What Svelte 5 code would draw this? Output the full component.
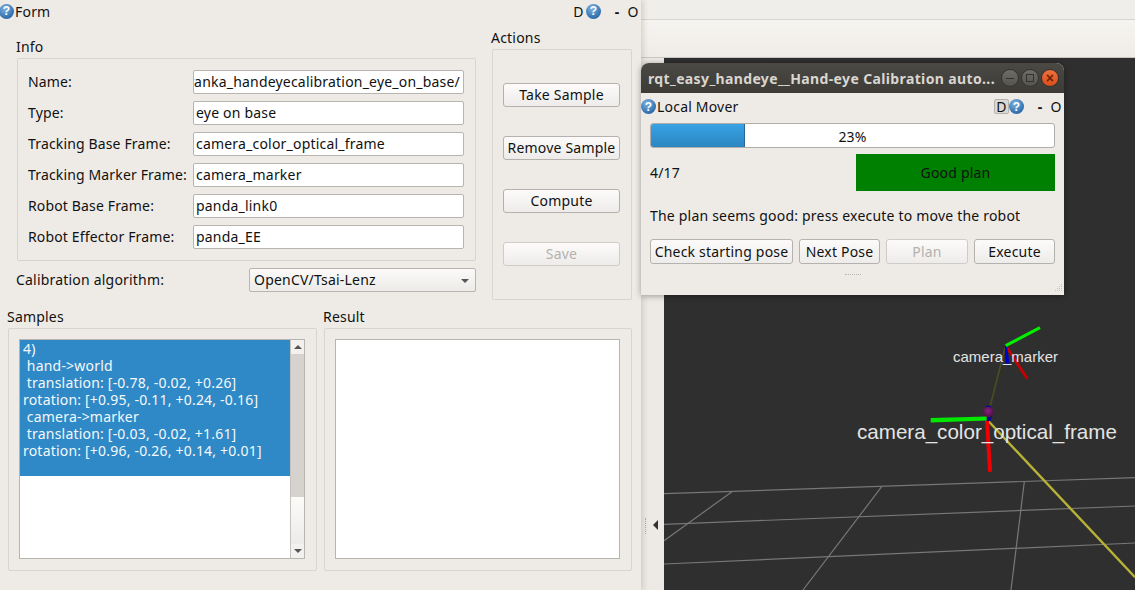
<script lang="ts">
  const fields = [
    { label: 'Name:', value: 'franka_handeyecalibration_eye_on_base/', clipped: true },
    { label: 'Type:', value: 'eye on base' },
    { label: 'Tracking Base Frame:', value: 'camera_color_optical_frame' },
    { label: 'Tracking Marker Frame:', value: 'camera_marker' },
    { label: 'Robot Base Frame:', value: 'panda_link0' },
    { label: 'Robot Effector Frame:', value: 'panda_EE' }
  ];

  const actions = [
    { label: 'Take Sample' },
    { label: 'Remove Sample' },
    { label: 'Compute' },
    { label: 'Save', disabled: true }
  ];

  const sample = [
    '4)',
    ' hand->world',
    ' translation: [-0.78, -0.02, +0.26]',
    'rotation: [+0.95, -0.11, +0.24, -0.16]',
    ' camera->marker',
    ' translation: [-0.03, -0.02, +1.61]',
    'rotation: [+0.96, -0.26, +0.14, +0.01]',
    ''
  ];

  const moverButtons = [
    { label: 'Check starting pose', width: 143 },
    { label: 'Next Pose', width: 81 },
    { label: 'Plan', width: 82, disabled: true },
    { label: 'Execute', width: 81 }
  ];

  const progress = 23;
</script>

<div class="desktop">
  <section class="form">
    <header class="dock-title form-title">
      <span class="help">?</span>
      <span class="dock-name">Form</span>
      <span class="dock-tools">
        <span class="tool-d">D</span>
        <span class="help">?</span>
        <span class="tool-min">-</span>
        <span class="tool-o">O</span>
      </span>
    </header>

    <div class="columns">
      <div class="left-col">
        <div class="group-title">Info</div>
        <div class="group info">
          {#each fields as field}
            <div class="field">
              <span class="field-label">{field.label}</span>
              <div class="input" class:clipped={field.clipped}><span>{field.value}</span></div>
            </div>
          {/each}
        </div>
        <div class="algo">
          <span>Calibration algorithm:</span>
          <div class="combo">OpenCV/Tsai-Lenz<i class="caret"></i></div>
        </div>
      </div>
      <div class="right-col">
        <div class="group-title actions-title">Actions</div>
        <div class="group action-box">
          {#each actions as action}
            <button class="btn" disabled={action.disabled}>{action.label}</button>
          {/each}
        </div>
      </div>
    </div>

    <div class="bottom">
      <div class="bottom-col samples">
        <div class="group-title">Samples</div>
        <div class="group text-box">
          <div class="list">
            <div class="list-text">
              {#each sample as line}
                <div class="list-line">{line}</div>
              {/each}
            </div>
            <div class="scrollbar">
              <div class="sb-btn"><i class="arrow-up"></i></div>
              <div class="sb-thumb"></div>
              <div class="sb-rest"></div>
              <div class="sb-btn"><i class="arrow-down"></i></div>
            </div>
          </div>
        </div>
      </div>
      <div class="bottom-col">
        <div class="group-title">Result</div>
        <div class="group text-box">
          <div class="list"></div>
        </div>
      </div>
    </div>
  </section>

  <section class="rviz">
    <div class="menubar"></div>
    <div class="toolbar"></div>
    <div class="view">
      <div class="side-strip">
        <i class="strip-dots"></i>
        <i class="strip-arrow"></i>
      </div>
      <svg class="scene" width="471" height="532" viewBox="664 58 471 532">
        <defs>
          <radialGradient id="ball" cx="0.45" cy="0.4" r="0.6">
            <stop offset="0" stop-color="#8a1f7c" />
            <stop offset="1" stop-color="#4c1046" />
          </radialGradient>
        </defs>
        <g stroke="#777775" stroke-width="1.2" fill="none">
          <line x1="664" y1="493.7" x2="1135" y2="477.7" />
          <line x1="664" y1="524.3" x2="1135" y2="506" />
          <line x1="664" y1="564" x2="1135" y2="543" />
          <line x1="732" y1="491.7" x2="664" y2="540.7" />
          <line x1="881.7" y1="486.7" x2="803" y2="590" />
          <line x1="1024.3" y1="481.7" x2="1011" y2="590" />
        </g>
        <line x1="986.7" y1="419.3" x2="1135" y2="577.3" stroke="#b8b336" stroke-width="2.4" />
        <line x1="1005" y1="348" x2="990" y2="407" stroke="#4a4a22" stroke-width="1.8" />
        <line x1="1006" y1="346" x2="1027.3" y2="378.7" stroke="#c80000" stroke-width="2.8" />
        <polygon points="1005,346 1007,346 1009.5,363.5 1005.5,363.5" fill="#0000c8" />
        <line x1="1005.7" y1="345.7" x2="1040" y2="327.7" stroke="#00f000" stroke-width="3" />
        <polygon points="985,420 989,420 992,471.7 988,471.7" fill="#f00000" />
        <path d="M986.5 405.5 h4 l1 2 h-6z M985 416 h7 l-1.5 5 h-4z" fill="#0a0a90" />
        <circle cx="988.5" cy="412" r="5.3" fill="url(#ball)" />
        <polygon points="930.7,418 986.7,416.6 986.7,420.6 930.7,422.4" fill="#00e800" />
        <text class="label-small" x="953" y="362">camera_marker</text>
        <text class="label-big" x="857" y="439">camera_color_optical_frame</text>
      </svg>
    </div>
  </section>

  <section class="mover">
    <header class="wm-bar">
      <span class="wm-title">rqt_easy_handeye__Hand-eye Calibration auto...</span>
      <span class="wm-btn"><i class="wm-dash"></i></span>
      <span class="wm-btn"><i class="wm-square"></i></span>
      <span class="wm-btn close">×</span>
    </header>
    <div class="dock-title mover-title">
      <span class="help">?</span>
      <span class="dock-name">Local Mover</span>
      <span class="dock-tools">
        <span class="tool-d pressed">D</span>
        <span class="help">?</span>
        <span class="tool-min">-</span>
        <span class="tool-o">O</span>
      </span>
    </div>
    <div class="mover-body">
      <div class="progress">
        <div class="progress-fill" style="width: {progress}%"></div>
        <span class="progress-text">{progress}%</span>
      </div>
      <div class="plan-row">
        <span>4/17</span>
        <div class="plan-state">Good plan</div>
      </div>
      <div class="plan-note">The plan seems good: press execute to move the robot</div>
      <div class="mover-buttons">
        {#each moverButtons as b}
          <button class="btn" disabled={b.disabled} style="width: {b.width}px">{b.label}</button>
        {/each}
      </div>
      <div class="grip-dots"></div>
    </div>
    <svg class="size-grip" width="13" height="13" viewBox="0 0 13 13">
      <g fill="#c4c1bc">
        <rect x="10" y="2" width="1" height="1" />
        <rect x="8" y="4" width="1" height="1" />
        <rect x="10" y="4" width="1" height="1" />
        <rect x="6" y="6" width="1" height="1" />
        <rect x="8" y="6" width="1" height="1" />
        <rect x="10" y="6" width="1" height="1" />
        <rect x="4" y="8" width="1" height="1" />
        <rect x="6" y="8" width="1" height="1" />
        <rect x="8" y="8" width="1" height="1" />
        <rect x="10" y="8" width="1" height="1" />
      </g>
    </svg>
  </section>
</div>

<style>
  :global(body) {
    margin: 0;
  }

  .desktop {
    position: relative;
    width: 1135px;
    height: 590px;
    overflow: hidden;
    display: flex;
    background: #2f2f2f;
    font-family: 'Noto Sans', 'Open Sans', sans-serif;
    font-size: 14px;
    letter-spacing: 0.2px;
    color: #111;
  }

  .form {
    position: relative;
    z-index: 2;
    width: 641px;
    flex: none;
    box-sizing: border-box;
    background: #eeebe7;
    box-shadow: 2px 0 6px rgba(60, 50, 40, 0.18);
  }

  .dock-title {
    height: 24px;
    display: flex;
    align-items: center;
  }

  .form-title {
    box-sizing: border-box;
    padding-bottom: 2px;
  }

  .form-title > .help {
    margin-left: -1px;
  }

  .dock-name {
    margin-left: 1px;
  }

  .dock-tools {
    margin-left: auto;
    display: flex;
    align-items: center;
  }

  .help {
    width: 15px;
    height: 15px;
    border-radius: 50%;
    flex: none;
    display: grid;
    place-items: center;
    background: radial-gradient(circle at 40% 30%, #7fb2e0, #2f6fad 70%, #235a92);
    color: #fff;
    font-family: 'Liberation Sans', sans-serif;
    font-size: 12px;
    font-weight: 700;
    line-height: 1;
  }

  .tool-d {
    width: 15px;
    height: 15px;
    line-height: 15px;
    text-align: center;
    box-sizing: border-box;
  }

  .tool-d.pressed {
    background: #dcd9d5;
    border: 1px solid #b5b2ae;
    border-radius: 2px;
    line-height: 13px;
  }

  .tool-min {
    width: 8px;
    margin-left: 12px;
    font-weight: 700;
    text-align: center;
  }

  .tool-o {
    width: 12px;
    margin-left: 6px;
    margin-right: 2px;
    text-align: center;
  }

  .columns {
    display: flex;
    margin-top: 6px;
  }

  .left-col {
    width: 460px;
    margin-left: 16px;
    padding-top: 9px;
  }

  .right-col {
    width: 140px;
    margin-left: 16px;
  }

  .group-title {
    height: 19px;
    line-height: 15px;
  }

  .actions-title {
    margin-left: -1px;
  }

  .group {
    box-sizing: border-box;
    border: 1px solid #d8d5d0;
    border-radius: 2px;
  }

  .info {
    margin-left: 1px;
    height: 203px;
    padding: 11px 11px 0 10px;
    display: flex;
    flex-direction: column;
    gap: 7px;
  }

  .field {
    display: flex;
    height: 24px;
    align-items: center;
  }

  .field-label {
    width: 165px;
    flex: none;
    white-space: nowrap;
    letter-spacing: 0.15px;
    padding-bottom: 2px;
  }

  .input {
    box-sizing: border-box;
    width: 271px;
    height: 24px;
    line-height: 22px;
    padding-left: 2px;
    background: #fff;
    border: 1px solid #b8b5b0;
    border-radius: 2px;
    overflow: hidden;
    white-space: nowrap;
  }

  .input.clipped {
    padding-left: 0;
    display: flex;
    justify-content: flex-end;
    padding-right: 3px;
  }

  .input.clipped span {
    flex: none;
  }

  .algo {
    margin-top: 7px;
    height: 24px;
    display: flex;
    align-items: center;
    justify-content: space-between;
  }

  .algo > span {
    padding-bottom: 2px;
  }

  .combo {
    position: relative;
    box-sizing: border-box;
    width: 227px;
    height: 24px;
    line-height: 22px;
    padding-left: 4px;
    background: linear-gradient(#fbfaf9, #ecebe8);
    border: 1px solid #b8b5b0;
    border-radius: 2px;
  }

  .caret {
    position: absolute;
    right: 6px;
    top: 10px;
    border-left: 4px solid transparent;
    border-right: 4px solid transparent;
    border-top: 4px solid #555;
  }

  .action-box {
    height: 251px;
    padding: 33px 11px 0 10px;
    display: flex;
    flex-direction: column;
    gap: 29px;
  }

  .btn {
    box-sizing: border-box;
    height: 24px;
    padding: 0;
    font: inherit;
    letter-spacing: inherit;
    color: #111;
    background: linear-gradient(#fcfbfa, #eeecea);
    border: 1px solid #b5b2ae;
    border-radius: 3px;
    white-space: nowrap;
  }

  .action-box .btn {
    padding-bottom: 2px;
  }

  .btn:disabled {
    color: #b3b1ad;
    border-color: #cfccc8;
  }

  .bottom {
    display: flex;
    gap: 7px;
    margin: 9px 0 0 8px;
  }

  .bottom-col {
    width: 308px;
  }

  .bottom-col.samples {
    width: 309px;
  }

  .bottom-col .group-title {
    margin-left: -1px;
  }

  .text-box {
    height: 243px;
    padding: 10px 11px 10px 10px;
  }

  .list {
    box-sizing: border-box;
    height: 220px;
    display: flex;
    background: #fff;
    border: 1px solid #b8b5b0;
  }

  .list-text {
    flex: 1;
  }

  .list-line {
    height: 17px;
    line-height: 17px;
    padding-left: 3px;
    background: #2f89c6;
    color: #f4f8fb;
    white-space: pre;
  }

  .scrollbar {
    width: 13px;
    flex: none;
    display: flex;
    flex-direction: column;
    border-left: 1px solid #c6c3bf;
  }

  .sb-btn {
    height: 14px;
    flex: none;
    display: grid;
    place-items: center;
    background: #f3f1ef;
  }

  .sb-thumb {
    height: 143px;
    background: #d6d3cf;
    flex: none;
  }

  .sb-rest {
    flex: 1;
    background: linear-gradient(#fbfbfa, #edebe9);
  }

  .arrow-up {
    border-left: 4px solid transparent;
    border-right: 4px solid transparent;
    border-bottom: 4px solid #555;
  }

  .arrow-down {
    border-left: 4px solid transparent;
    border-right: 4px solid transparent;
    border-top: 4px solid #555;
  }

  .rviz {
    flex: 1;
    display: flex;
    flex-direction: column;
    min-width: 0;
  }

  .menubar {
    height: 19px;
    background: #f0eeea;
    border-bottom: 1px solid #d8d5d1;
  }

  .toolbar {
    height: 37px;
    background: linear-gradient(#f6f4f0, #efece8);
    border-bottom: 1px solid #c9c6c2;
  }

  .view {
    flex: 1;
    display: flex;
    min-height: 0;
  }

  .side-strip {
    position: relative;
    width: 23px;
    flex: none;
    background: #edeae6;
  }

  .strip-dots {
    position: absolute;
    left: 4px;
    top: 460px;
    height: 16px;
    border-left: 1px dotted #b0ada9;
  }

  .strip-arrow {
    position: absolute;
    left: 12px;
    top: 462px;
    border-top: 5px solid transparent;
    border-bottom: 5px solid transparent;
    border-right: 5px solid #333;
  }

  .scene {
    display: block;
    flex: none;
  }

  .label-small,
  .label-big {
    font-family: 'Liberation Sans', sans-serif;
    fill: #e4e4e4;
    letter-spacing: 0;
  }

  .label-small {
    font-size: 15px;
  }

  .label-big {
    font-size: 20.6px;
  }

  .mover {
    position: absolute;
    z-index: 3;
    left: 641px;
    top: 63px;
    width: 423px;
    height: 232px;
    background: #eeebe7;
    border-radius: 8px 8px 0 0;
    box-shadow: 0 1px 6px rgba(0, 0, 0, 0.35);
  }

  .wm-bar {
    height: 30px;
    display: flex;
    align-items: center;
    gap: 2px;
    padding: 0 5px 0 7px;
    background: linear-gradient(#4b4944, #3c3b37);
    border-radius: 8px 8px 0 0;
  }

  .wm-title {
    flex: 1;
    min-width: 0;
    white-space: nowrap;
    font-weight: 700;
    letter-spacing: 0.37px;
    color: #d9d6d0;
  }

  .wm-btn {
    width: 16px;
    height: 16px;
    border-radius: 50%;
    flex: none;
    display: grid;
    place-items: center;
    background: linear-gradient(#6f6d68, #55534e);
    border: 1px solid #34332f;
  }

  .wm-btn.close {
    background: linear-gradient(#f0703c, #dd4d1c);
    color: #6e2408;
    font-family: 'Liberation Sans', sans-serif;
    font-size: 14px;
    font-weight: 700;
    line-height: 1;
  }

  .wm-dash {
    width: 8px;
    height: 1px;
    background: #33322e;
  }

  .wm-square {
    box-sizing: border-box;
    width: 8px;
    height: 8px;
    border: 1px solid #33322e;
  }

  .mover-title {
    height: 27px;
  }

  .mover-body {
    padding: 3px 9px 0 9px;
  }

  .progress {
    position: relative;
    box-sizing: border-box;
    height: 25px;
    background: #fff;
    border: 1px solid #b0adaa;
    border-radius: 3px;
    overflow: hidden;
    text-align: center;
    line-height: 25px;
  }

  .progress-fill {
    position: absolute;
    left: 0;
    top: 0;
    bottom: 0;
    background: linear-gradient(#38a3e4, #2c86c2);
    border-right: 1px solid #24699a;
  }

  .progress-text {
    position: relative;
  }

  .plan-row {
    margin-top: 6px;
    height: 37px;
    display: flex;
    align-items: center;
    justify-content: space-between;
  }

  .plan-state {
    width: 199px;
    height: 37px;
    line-height: 37px;
    text-align: center;
    background: #008000;
  }

  .plan-note {
    height: 19px;
    line-height: 17px;
    margin-top: 16px;
    white-space: nowrap;
  }

  .mover-buttons {
    margin-top: 13px;
    display: flex;
    gap: 6px;
  }

  .mover-buttons .btn {
    height: 25px;
  }

  .grip-dots {
    width: 16px;
    height: 2px;
    margin: 10px auto 0;
    border-top: 1px dotted #b8b5b1;
  }

  .size-grip {
    position: absolute;
    right: 0;
    bottom: 0;
  }
</style>
